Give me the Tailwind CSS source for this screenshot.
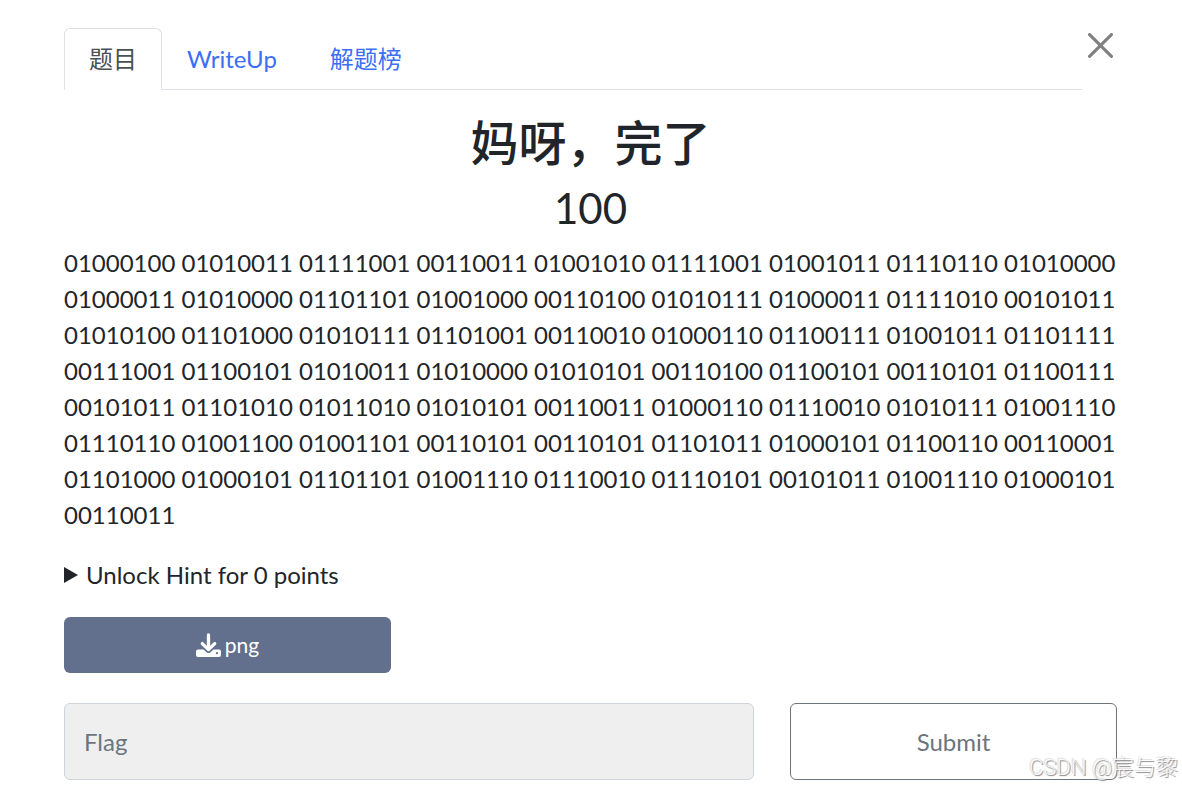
<!DOCTYPE html>
<html lang="zh-CN">
<head>
<meta charset="utf-8">
<meta name="viewport" content="width=device-width, initial-scale=1">
<title>妈呀，完了</title>
<script src="https://cdn.jsdelivr.net/npm/@tailwindcss/browser@4"></script>
</head>
<body class="relative bg-white font-[Lato,'Noto_Sans_CJK_SC',sans-serif] text-2xl/9 text-[#212529]">
<main class="pt-7 pr-[65px] pb-2 pl-16">
  <header class="flex items-start">
    <nav class="flex flex-1 gap-px border-b border-[#dee2e6]" aria-label="Challenge">
      <a href="#challenge" aria-current="page" class="-mb-px rounded-t-md border border-[#dee2e6] border-b-white bg-white px-6 py-3 text-[#495057]">题目</a>
      <a href="#writeup" class="mt-px px-6 py-3 text-[#3b6ff5]">WriteUp</a>
      <a href="#solves" class="mt-px px-7 py-3 text-[#3b6ff5]">解题榜</a>
    </nav>
    <button type="button" aria-label="Close" class="py-[5px] pr-1 pl-1.5">
      <svg class="size-[25px] text-[#808080]" viewBox="0 0 16 16" fill="currentColor" aria-hidden="true"><path d="M.293.293a1 1 0 0 1 1.414 0L8 6.586 14.293.293a1 1 0 1 1 1.414 1.414L9.414 8l6.293 6.293a1 1 0 0 1-1.414 1.414L8 9.414l-6.293 6.293a1 1 0 0 1-1.414-1.414L6.586 8 .293 1.707a1 1 0 0 1 0-1.414z"/></svg>
    </button>
  </header>

  <section id="challenge">
    <h2 class="mt-6 text-center text-5xl/[58px] font-medium">妈呀，完了</h2>
    <h3 class="mt-[11px] text-center text-[42px]/[50px]">100</h3>
    <p class="mt-3">01000100 01010011 01111001 00110011 01001010 01111001 01001011 01110110 01010000 01000011 01010000 01101101 01001000 00110100 01010111 01000011 01111010 00101011 01010100 01101000 01010111 01101001 00110010 01000110 01100111 01001011 01101111 00111001 01100101 01010011 01010000 01010101 00110100 01100101 00110101 01100111 00101011 01101010 01011010 01010101 00110011 01000110 01110010 01010111 01001110 01110110 01001100 01001101 00110101 00110101 01101011 01000101 01100110 00110001 01101000 01000101 01101101 01001110 01110010 01110101 00101011 01001110 01000101 00110011</p>
    <details class="group mt-6">
      <summary class="flex cursor-pointer items-center gap-2">
        <svg class="h-4 w-3.5 group-open:rotate-90" viewBox="0 0 14 16" fill="currentColor" aria-hidden="true"><path d="M0 0l14 8-14 8z"/></svg>
        <span>Unlock Hint for 0 points</span>
      </summary>
    </details>
    <div class="mt-6 grid grid-cols-3 gap-9">
      <a href="#png" class="flex h-14 items-center justify-center gap-1 rounded-md bg-[#62708d] text-[21px] text-white">
        <svg class="size-[25px]" viewBox="0 0 25 25" aria-hidden="true">
          <path d="M2 16.500h5.500l3 2.700a3 3 0 0 0 4 0l3-2.700H23a2 2 0 0 1 2 2v3.500a2 2 0 0 1-2 2H2a2 2 0 0 1-2-2v-3.500a2 2 0 0 1 2-2z" fill="currentColor"/>
          <path d="M12.500 1.800v14M6.300 10.600l6.200 5.900 6.200-5.900" fill="none" stroke="currentColor" stroke-width="3.300" stroke-linecap="round" stroke-linejoin="round"/>
          <circle cx="21" cy="20.200" r="1.100" fill="#62708d"/>
        </svg>
        <span>png</span>
      </a>
    </div>
    <form class="mt-[30px] grid grid-cols-3 gap-9">
      <input type="text" name="flag" aria-label="Flag" placeholder="Flag" class="col-span-2 h-[77px] min-w-0 rounded-md border border-[#ced4da] bg-[#efefef] px-[19px] placeholder:text-[#6c757d] placeholder:opacity-100">
      <button type="submit" class="h-[77px] rounded-md border border-[#6c757d] text-[#6c757d]">Submit</button>
    </form>
  </section>
</main>
<div class="pointer-events-none absolute right-1 bottom-1 font-[Roboto,'Noto_Sans_CJK_SC',sans-serif] text-[22px]/8 font-light text-white/80 [text-shadow:1px_1px_1px_#888,-1px_-1px_1px_#ddd]">CSDN @宸与黎</div>
</body>
</html>
